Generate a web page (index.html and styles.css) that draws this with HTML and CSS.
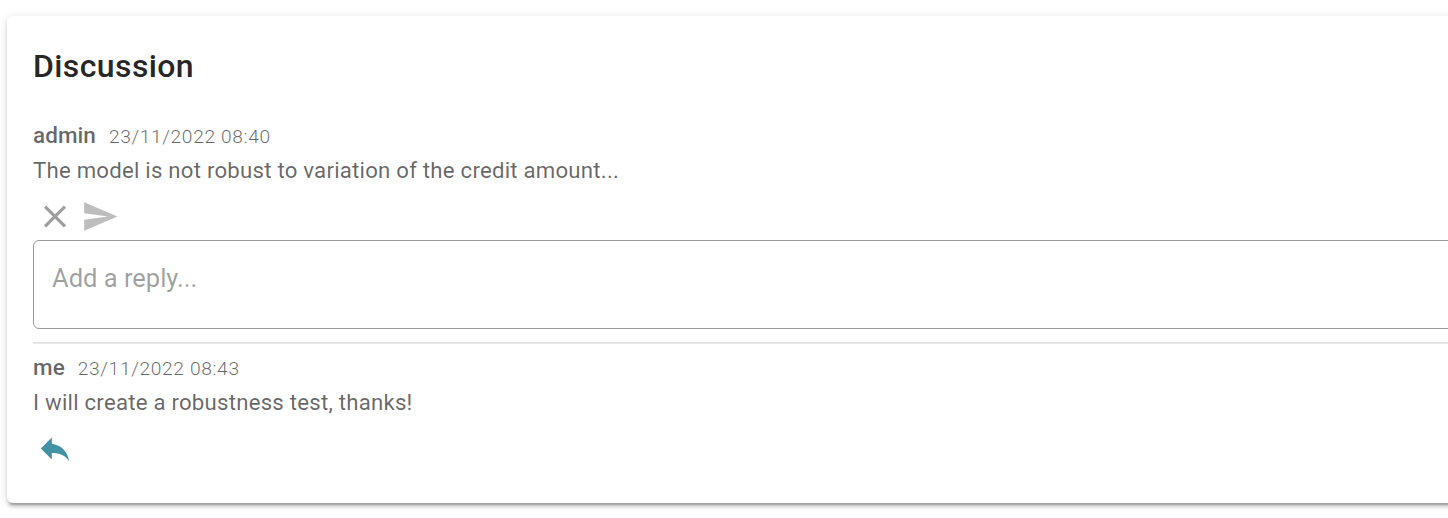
FILE: index.html
```html
<!DOCTYPE html>
<html lang="en">
<head>
<meta charset="utf-8">
<title>Discussion</title>
<link rel="stylesheet" href="styles.css">
</head>
<body>
<section class="card">
  <h1 class="title">Discussion</h1>
  <article class="comment">
    <header class="meta"><span class="author">admin</span><time class="date">23/11/2022 08:40</time></header>
    <p class="message">The model is not robust to variation of the credit amount...</p>
    <div class="actions">
      <svg class="icon" viewBox="0 -.33 24 24"><path d="M19 6.41 17.59 5 12 10.59 6.41 5 5 6.41 10.59 12 5 17.59 6.41 19 12 13.41 17.59 19 19 17.59 13.41 12z"/></svg>
      <svg class="icon send" viewBox="0 -.33 24 24"><path d="M2 21l21-9L2 3v7l15 2-15 2z"/></svg>
    </div>
    <textarea class="reply-box" placeholder="Add a reply..."></textarea>
  </article>
  <article class="comment second">
    <header class="meta"><span class="author">me</span><time class="date">23/11/2022 08:43</time></header>
    <p class="message">I will create a robustness test, thanks!</p>
    <div class="actions">
      <svg class="icon reply" viewBox="0 -.33 24 24"><path d="M10 9V5l-7 7 7 7v-4.100c5 0 8.500 1.600 11 5.100-1-5-4-10-11-11z"/></svg>
    </div>
  </article>
</section>
</body>
</html>
```

FILE: styles.css
```css
* { box-sizing: border-box; }
body { margin: 0; height: 518px; overflow: hidden; background: #fff; font-family: Roboto, sans-serif; color: rgba(0,0,0,.6); }
.card { width: 1500px; height: 487px; margin: 16px 0 0 7px; padding: 30px 26px; border-radius: 6px; background: #fff; box-shadow: 0 4.75px 1.6px -3.2px rgba(0,0,0,.2), 0 3.2px 3.2px rgba(0,0,0,.14), 0 1.6px 8px rgba(0,0,0,.12); }
.title { margin: 0; font-size: 32px; line-height: 40px; font-weight: 500; letter-spacing: .4px; color: rgba(0,0,0,.87); }
.comment { padding-top: 32px; }
.meta { display: flex; align-items: baseline; gap: 13px; height: 35px; line-height: 35px; }
.author { font-size: 22.5px; font-weight: 500; letter-spacing: .05px; }
.date { font-size: 19.2px; font-weight: 300; letter-spacing: .64px; }
.message { margin: 0; font-size: 22.2px; line-height: 35px; letter-spacing: .23px; }
.actions { display: flex; gap: 7px; padding: 9px 3px 0; height: 52px; }
.icon { width: 38px; height: 38px; flex: none; fill: rgba(0,0,0,.38); }
.send { fill: rgba(0,0,0,.26); }
.reply { fill: #4391a4; }
.reply-box { display: block; width: 1460px; height: 89px; padding: 19px 18px; border: 1px solid #9a9a9a; border-radius: 6px; resize: none; outline: 0; background: transparent; font: 25.5px/36px Roboto, sans-serif; }
.reply-box::placeholder { color: rgba(0,0,0,.38); opacity: 1; }
.second { width: 1460px; margin-top: 13px; padding-top: 7px; border-top: 1px solid #dedede; box-shadow: inset 0 1px #ebebeb; }
```
